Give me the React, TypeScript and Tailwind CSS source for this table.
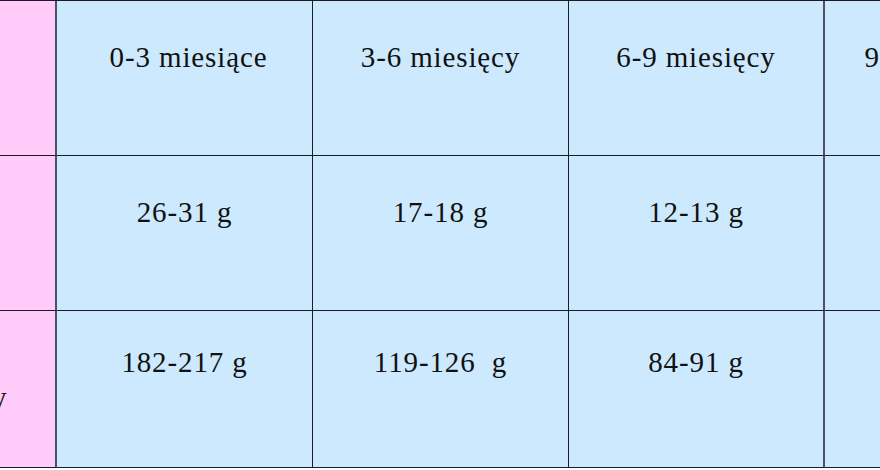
import React from 'react';

const rows = [
  { label: '', cells: ['0-3 miesiące', '3-6 miesięcy', '6-9 miesięcy', '9-12 miesięcy'], h: 'h-[155px]', pt: 'pt-[39px]' },
  { label: 'Przyrost dobowy', cells: ['26-31 g', '17-18 g', '12-13 g', '9-10 g'], h: 'h-[155px]', pt: 'pt-[39px]' },
  { label: 'Przyrost tygodniowy', cells: ['182-217 g', '119-126  g', '84-91 g', '63-70 g'], h: 'h-[157px]', pt: 'pt-[34px]' },
];

const App = () => {
  return (
    <div className="w-[880px] h-[470px] overflow-hidden bg-white">
      <div className="ml-[-182px] w-[1262px] grid grid-cols-[239px_256px_256px_256px_255px] border-t border-[#1b1d26] font-['Liberation_Serif','Times_New_Roman',serif] text-[29px] leading-[34px] tracking-[0.03em] text-[#111] whitespace-pre">
        {rows.map((row, i) => (
          <React.Fragment key={i}>
            {/* Label column */}
            <div className={`${row.h} ${row.pt} bg-[#ffcbf9] border-b border-r-2 border-b-[#1b1d26] border-r-[#4c5163] text-left whitespace-normal pl-[42px] leading-[35px]`}>
              {row.label}
            </div>
            {row.cells.map((c, j) => (
              <div
                key={j}
                className={`${row.h} ${row.pt} bg-[#cce9fd] border-b border-b-[#1b1d26] text-center ${
                  j === 2 ? 'border-r-2 border-r-[#4c5163]' : 'border-r border-r-[#1b1d26]'
                } ${i === 0 && j === 0 ? 'pl-[8px]' : ''}`}
              >
                {c}
              </div>
            ))}
          </React.Fragment>
        ))}
      </div>
    </div>
  );
};

export default App;
